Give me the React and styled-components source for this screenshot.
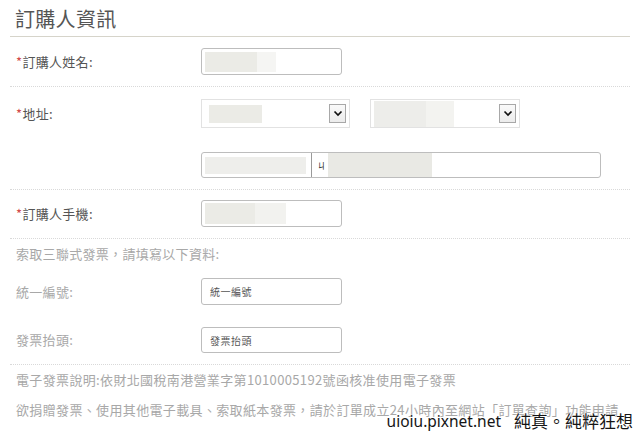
import React from 'react';
import styled, { createGlobalStyle } from 'styled-components';

const Global = createGlobalStyle`
  html, body { margin: 0; padding: 0; background: #fff; }
  body { font-family: "Noto Sans CJK TC", "Noto Sans", sans-serif; }
  * { box-sizing: border-box; }
`;

const Page = styled.div`
  position: relative;
  width: 640px;
  height: 432px;
  overflow: hidden;
  background: #fff;
  padding: 0 10px 0 10px;
`;

const Title = styled.h2`
  margin: 0;
  height: 37px;
  padding: 5px 0 0 5px;
  font-size: 20px;
  font-weight: 400;
  line-height: 28px;
  color: #555;
  letter-spacing: 0.3px;
  border-bottom: 1px solid #d6d4ca;
`;

const Row = styled.div`
  display: flex;
  align-items: ${p => (p.$top ? 'flex-start' : 'center')};
  padding: ${p => p.$pad || '11px 0 11px 6px'};
  border-bottom: 1px dotted #d9d9d9;
`;

const Section = styled.div`
  padding: 7px 0 11px 6px;
  border-bottom: 1px dotted #d9d9d9;
  display: flex;
  flex-direction: column;
`;

const Label = styled.div`
  width: 185px;
  flex: none;
  font-size: 13px;
  line-height: ${p => p.$h || 27}px;
  color: ${p => (p.$muted ? '#a8a8a8' : '#555')};
  letter-spacing: 0.3px;
`;

const Star = styled.span`
  color: #d24a4a;
`;

const Note = styled.div`
  font-size: 13px;
  line-height: 16px;
  color: #a8a8a8;
  letter-spacing: 0.3px;
`;

const SubRow = styled.div`
  display: flex;
  align-items: center;
  margin-top: ${p => p.$mt || 0}px;
`;

const Field = styled.div`
  display: flex;
  align-items: center;
  width: ${p => p.$w || 141}px;
  height: ${p => p.$h || 27}px;
  border: 1px solid #bdbdbd;
  border-radius: 3px;
  background: #fff;
  padding: 0 3px;
  font-size: 10px;
  color: #555;
`;

const Placeholder = styled.span`
  padding-left: 5px;
  letter-spacing: 0.5px;
`;

const Blur = styled.span`
  display: block;
  width: ${p => p.$w}px;
  height: ${p => p.$h || 20}px;
  background: ${p => p.$c || '#ebebe6'};
  margin-left: ${p => p.$ml || 0}px;
  flex: none;
`;

const Column = styled.div`
  display: flex;
  flex-direction: column;
`;

const SelectRow = styled.div`
  display: flex;
  gap: 20px;
`;

const Select = styled.div`
  display: flex;
  align-items: center;
  width: ${p => p.$w}px;
  height: 29px;
  border: 1px solid #e2e2e2;
  background: #fff;
  padding: 0 3px 0 4px;
`;

const Arrow = styled.span`
  margin-left: auto;
  width: 17px;
  height: 19px;
  border: 1px solid #a8a8a8;
  background: linear-gradient(#fafafa, #ececec);
  display: flex;
  align-items: center;
  justify-content: center;
`;

const Address = styled.div`
  display: flex;
  width: 400px;
  height: 26px;
  margin-top: 24px;
  border: 1px solid #bdbdbd;
  border-radius: 3px;
`;

const Zip = styled.div`
  width: 110px;
  display: flex;
  align-items: center;
  padding-left: 3px;
  border-right: 1px solid #9a9a9a;
`;

const Street = styled.div`
  flex: 1;
  display: flex;
  align-items: center;
  padding-left: 5px;
  font-size: 9px;
  color: #333;
`;

const Footer = styled.div`
  padding-left: 6px;
`;

const FootLine = styled.div`
  font-size: 13px;
  line-height: 30px;
  color: #a8a8a8;
  letter-spacing: 0.35px;
  white-space: nowrap;
`;

const Watermark = styled.div`
  position: absolute;
  right: 7px;
  bottom: 1px;
  display: flex;
  gap: 13px;
  font-size: 17px;
  line-height: 20px;
  color: #151515;
  white-space: nowrap;
  text-shadow: 0 0 2px #fff, 0 0 2px #fff;
`;

const WmLatin = styled.span`
  font-family: "Noto Sans", "Open Sans", sans-serif;
  font-size: 15.5px;
`;

const WmCjk = styled.span`
  font-family: "Noto Sans CJK TC", sans-serif;
`;

const Chevron = () => (
  <svg width="10" height="7" viewBox="0 0 10 7">
    <polyline points="1.5,1.5 5,5 8.5,1.5" fill="none" stroke="#111" strokeWidth="1.7" />
  </svg>
);

export default function App() {
  return (
    <Page>
      <Global />
      <Title>訂購人資訊</Title>

      <Row>
        <Label><Star>*</Star>訂購人姓名:</Label>
        <Field>
          <Blur $w={52} $c="#ebebe6" />
          <Blur $w={19} $c="#f5f5f3" />
        </Field>
      </Row>

      <Row $top $pad="12px 0 11px 6px">
        <Label $h={29}><Star>*</Star>地址:</Label>
        <Column>
          <SelectRow>
            <Select $w={149}>
              <Blur $w={53} $h={18} $ml={3} />
              <Arrow><Chevron /></Arrow>
            </Select>
            <Select $w={150}>
              <Blur $w={52} $h={26} $c="#ededea" $ml={-1} />
              <Blur $w={28} $h={26} $c="#f3f3f0" />
              <Arrow><Chevron /></Arrow>
            </Select>
          </SelectRow>
          <Address>
            <Zip>
              <Blur $w={101} $h={17} $c="#eeeeeb" />
            </Zip>
            <Street>
              ㄐ
              <Blur $w={104} $h={24} $c="#e9e9e4" $ml={2} />
            </Street>
          </Address>
        </Column>
      </Row>

      <Row $pad="10px 0 11px 6px">
        <Label><Star>*</Star>訂購人手機:</Label>
        <Field>
          <Blur $w={50} $h={21} $c="#ebebe6" />
          <Blur $w={31} $h={21} $c="#f2f2ef" />
        </Field>
      </Row>

      <Section>
        <Note>索取三聯式發票，請填寫以下資料:</Note>
        <SubRow $mt={16}>
          <Label $muted>統一編號:</Label>
          <Field><Placeholder>統一編號</Placeholder></Field>
        </SubRow>
        <SubRow $mt={22}>
          <Label $muted $h={26}>發票抬頭:</Label>
          <Field $h={26}><Placeholder>發票抬頭</Placeholder></Field>
        </SubRow>
      </Section>

      <Footer>
        <FootLine>電子發票說明:依財北國稅南港營業字第1010005192號函核准使用電子發票</FootLine>
        <FootLine>欲捐贈發票、使用其他電子載具、索取紙本發票，請於訂單成立24小時內至網站「訂單查詢」功能申請</FootLine>
      </Footer>

      <Watermark>
        <WmLatin>uioiu.pixnet.net</WmLatin>
        <WmCjk>純真。純粹狂想</WmCjk>
      </Watermark>
    </Page>
  );
}
